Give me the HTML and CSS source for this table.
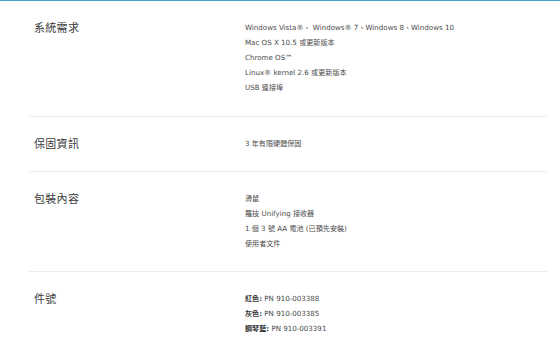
FILE: index.html
```html
<!DOCTYPE html>
<html lang="zh-Hant">
<head>
<meta charset="utf-8">
<link rel="stylesheet" href="styles.css">
</head>
<body>
<div class="page">
  <div class="specs">
    <section class="row">
      <h3 class="title">系統需求</h3>
      <ul class="list">
        <li>Windows Vista®、 Windows® 7、Windows 8、Windows 10</li>
        <li>Mac OS X 10.5 或更新版本</li>
        <li>Chrome OS™</li>
        <li>Linux® kernel 2.6 或更新版本</li>
        <li>USB 連接埠</li>
      </ul>
    </section>
    <section class="row">
      <h3 class="title">保固資訊</h3>
      <ul class="list">
        <li>3 年有限硬體保固</li>
      </ul>
    </section>
    <section class="row">
      <h3 class="title">包裝內容</h3>
      <ul class="list">
        <li>滑鼠</li>
        <li>羅技 Unifying 接收器</li>
        <li>1 個 3 號 AA 電池 (已預先安裝)</li>
        <li>使用者文件</li>
      </ul>
    </section>
    <section class="row last">
      <h3 class="title">件號</h3>
      <ul class="list">
        <li><b class="label">紅色:</b> PN 910-003388</li>
        <li><b class="label">灰色:</b> PN 910-003385</li>
        <li><b class="label">鋼琴藍:</b> PN 910-003391</li>
      </ul>
    </section>
  </div>
</div>
</body>
</html>
```
FILE: styles.css
```css
html, body {
  margin: 0;
  padding: 0;
  background: #fff;
}
body {
  font-family: "DejaVu Sans", "Noto Sans CJK TC", sans-serif;
  color: #555;
}
.page {
  border-top: 1px solid #4aa3d0;
  width: 560px;
  height: 351px;
  overflow: hidden;
}
.specs {
  margin-left: 28px;
  width: 520px;
}
.row {
  display: grid;
  grid-template-columns: 211px 1fr;
  padding: 19px 0 20px 6px;
  border-bottom: 1px solid #eeeeee;
}
.row:first-child {
  padding-bottom: 21px;
}
.row.last {
  border-bottom: none;
}
.title {
  margin: 0;
  font-family: "Noto Sans CJK TC", sans-serif;
  font-weight: 400;
  font-size: 11px;
  line-height: 15px;
  color: #3a3a3a;
  letter-spacing: 0.3px;
}
.list {
  list-style: none;
  margin: 0;
  padding: 0;
  font-size: 7.1px;
  line-height: 15px;
  color: #4a4a4a;
}
.label {
  font-weight: 700;
  color: #333;
}
```
